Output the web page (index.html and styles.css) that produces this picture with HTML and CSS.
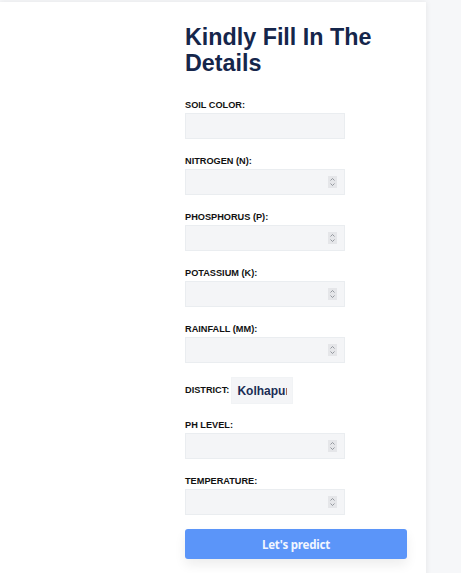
FILE: index.html
```html
<!DOCTYPE html>
<html lang="en">
<head>
    <meta charset="UTF-8">
    <meta name="viewport" content="width=device-width, initial-scale=1.0">
    <title>Crop Prediction - Details</title>
    <link rel="stylesheet" href="styles.css">
</head>
<body>
    <div class="page">
        <div class="card">
            <h1>Kindly Fill In The Details</h1>

            <form class="form" onsubmit="return false">
                <div class="group">
                    <label for="soil">Soil Color:</label>
                    <div class="field">
                        <input type="text" id="soil">
                    </div>
                </div>

                <div class="group">
                    <label for="nitrogen">Nitrogen (N):</label>
                    <div class="field">
                        <input type="number" id="nitrogen">
                        <span class="spin"><svg viewBox="0 0 9 12" width="9" height="12"><path d="M2.5 4.5 L4.5 2.5 L6.5 4.5 M2.5 7.5 L4.5 9.5 L6.5 7.5" fill="none" stroke="#8a8e95" stroke-width="0.9"/></svg></span>
                    </div>
                </div>

                <div class="group">
                    <label for="phosphorus">Phosphorus (P):</label>
                    <div class="field">
                        <input type="number" id="phosphorus">
                        <span class="spin"><svg viewBox="0 0 9 12" width="9" height="12"><path d="M2.5 4.5 L4.5 2.5 L6.5 4.5 M2.5 7.5 L4.5 9.5 L6.5 7.5" fill="none" stroke="#8a8e95" stroke-width="0.9"/></svg></span>
                    </div>
                </div>

                <div class="group">
                    <label for="potassium">Potassium (K):</label>
                    <div class="field">
                        <input type="number" id="potassium">
                        <span class="spin"><svg viewBox="0 0 9 12" width="9" height="12"><path d="M2.5 4.5 L4.5 2.5 L6.5 4.5 M2.5 7.5 L4.5 9.5 L6.5 7.5" fill="none" stroke="#8a8e95" stroke-width="0.9"/></svg></span>
                    </div>
                </div>

                <div class="group">
                    <label for="rainfall">Rainfall (mm):</label>
                    <div class="field">
                        <input type="number" id="rainfall">
                        <span class="spin"><svg viewBox="0 0 9 12" width="9" height="12"><path d="M2.5 4.5 L4.5 2.5 L6.5 4.5 M2.5 7.5 L4.5 9.5 L6.5 7.5" fill="none" stroke="#8a8e95" stroke-width="0.9"/></svg></span>
                    </div>
                </div>

                <div class="group district">
                    <label for="district">District:</label>
                    <select id="district">
                        <option>Kolhapur</option>
                        <option>Pune</option>
                        <option>Satara</option>
                        <option>Sangli</option>
                        <option>Solapur</option>
                    </select>
                </div>

                <div class="group">
                    <label for="ph">pH Level:</label>
                    <div class="field">
                        <input type="number" id="ph">
                        <span class="spin"><svg viewBox="0 0 9 12" width="9" height="12"><path d="M2.5 4.5 L4.5 2.5 L6.5 4.5 M2.5 7.5 L4.5 9.5 L6.5 7.5" fill="none" stroke="#8a8e95" stroke-width="0.9"/></svg></span>
                    </div>
                </div>

                <div class="group last">
                    <label for="temperature">Temperature:</label>
                    <div class="field">
                        <input type="number" id="temperature">
                        <span class="spin"><svg viewBox="0 0 9 12" width="9" height="12"><path d="M2.5 4.5 L4.5 2.5 L6.5 4.5 M2.5 7.5 L4.5 9.5 L6.5 7.5" fill="none" stroke="#8a8e95" stroke-width="0.9"/></svg></span>
                    </div>
                </div>

                <button type="submit" class="predict">Let's predict</button>
            </form>
        </div>
    </div>
</body>
</html>
```

FILE: styles.css
```css
body {
    margin: 0;
    padding: 0;
    font-family: "Liberation Sans", Arial, sans-serif;
    background-color: #f6f7f9;
}
.page {
    padding-top: 2px;
}
.card {
    width: 426px;
    min-height: 600px;
    box-sizing: border-box;
    background: white;
    padding: 22px 20px 0 185px;
    box-shadow: 0 0 6px rgba(0, 0, 0, 0.08);
}
h1 {
    margin: 0 0 24px;
    width: 200px;
    font-size: 23.3px;
    line-height: 26px;
    font-weight: bold;
    color: #15264b;
}
.form {
    display: flex;
    flex-direction: column;
}
.group {
    margin-bottom: 17px;
}
.group.last {
    margin-bottom: 14px;
}
.group label {
    display: block;
    font-size: 9.2px;
    line-height: 11px;
    font-weight: bold;
    text-transform: uppercase;
    color: #111;
    margin-bottom: 2px;
}
.field {
    position: relative;
    width: 160px;
}
.field input {
    display: block;
    width: 160px;
    height: 26px;
    box-sizing: border-box;
    border: 1px solid #eaedf0;
    background: #f4f5f7;
    padding: 0 6px;
    font-size: 12px;
    outline: none;
    -moz-appearance: textfield;
}
.field input::-webkit-inner-spin-button,
.field input::-webkit-outer-spin-button {
    -webkit-appearance: none;
    margin: 0;
}
.spin {
    position: absolute;
    right: 8px;
    top: 7px;
    width: 9px;
    height: 12px;
    background: #e5e6e9;
    display: flex;
}
.district {
    display: flex;
    align-items: center;
    margin-top: -3px;
    margin-bottom: 16px;
}
.district label {
    display: inline;
    margin: 0 2px 0 0;
}
.district select {
    -webkit-appearance: none;
    appearance: none;
    width: 62px;
    height: 27px;
    border: 1px solid #f1f3f5;
    background: #f4f5f7;
    padding: 0 5px;
    font-family: "Liberation Sans", Arial, sans-serif;
    font-size: 12px;
    font-weight: bold;
    color: #1b2d55;
    outline: none;
}
.predict {
    width: 222px;
    height: 30px;
    border: none;
    border-radius: 3px;
    background-color: #5b95f9;
    color: #f2f6ff;
    font-family: "Noto Sans", sans-serif;
    font-size: 11.5px;
    font-weight: bold;
    letter-spacing: -0.2px;
    cursor: pointer;
    box-shadow: 0 6px 12px rgba(0, 0, 0, 0.07);
}
```
